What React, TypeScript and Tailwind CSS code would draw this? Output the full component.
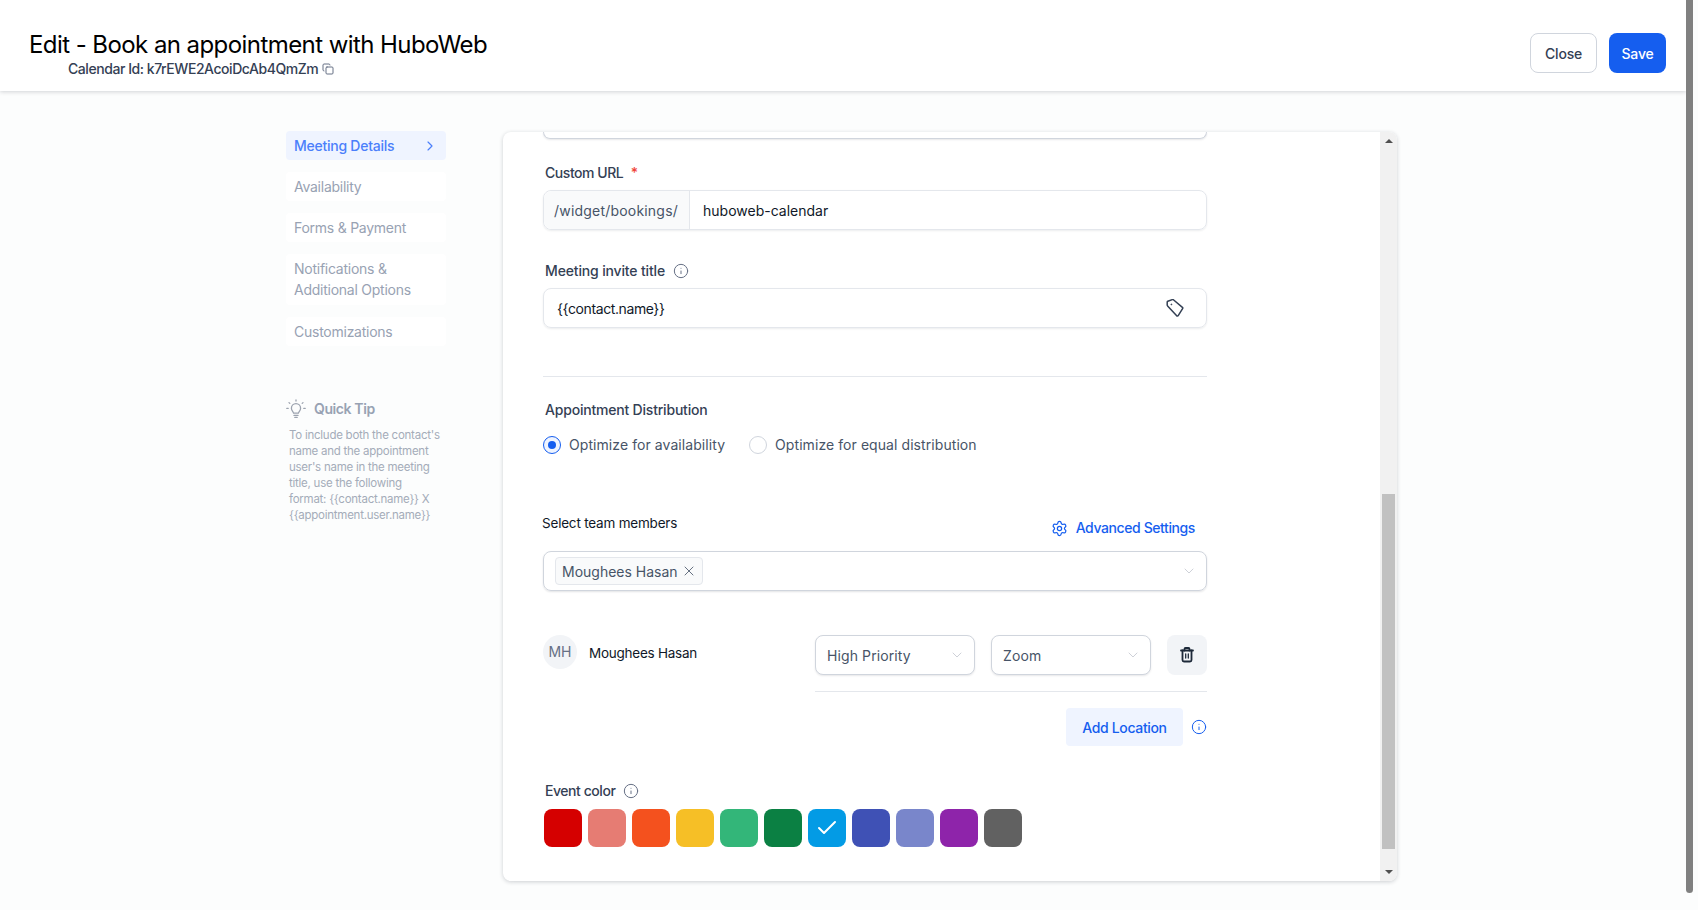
import { Check, ChevronDown, ChevronRight, Copy, Info, Settings, X } from "lucide-react";

const navItems = [
  { name: "Availability", h: "h-[29px]" },
  { name: "Forms & Payment", h: "h-[29px]" },
  { name: "Notifications & Additional Options", h: "h-[51px] pb-[2px]" },
  { name: "Customizations", h: "h-[29px]" },
];

const colors = [
  { hex: "bg-[#d50000]" },
  { hex: "bg-[#e67c73]" },
  { hex: "bg-[#f4511e]" },
  { hex: "bg-[#f6bf26]" },
  { hex: "bg-[#33b679]" },
  { hex: "bg-[#0b8043]" },
  { hex: "bg-[#039be5]", selected: true },
  { hex: "bg-[#3f51b5]" },
  { hex: "bg-[#7986cb]" },
  { hex: "bg-[#8e24aa]" },
  { hex: "bg-[#616161]" },
];

function SelectBox({ label }: { label: string }) {
  return (
    <div className="flex h-10 w-[160px] items-center justify-between rounded-lg border border-[#d0d5dd] bg-white pl-[11px] pr-[9px] text-[14px] tracking-[0.1px] text-[#475467] shadow-[0_1px_2px_rgba(16,24,40,0.1)]">
      <span>{label}</span>
      <ChevronDown className="h-4 w-4 text-[#c4c8d0]" strokeWidth={1.25} />
    </div>
  );
}

function Bulb() {
  return (
    <svg width="20" height="20" viewBox="0 0 20 20" fill="none" stroke="#9ca3af" strokeWidth="1.3" strokeLinecap="round" strokeLinejoin="round">
      <path d="M7.6 14.2c0-1.3-2.2-2.4-2.2-5a4.6 4.6 0 0 1 9.2 0c0 2.6-2.2 3.7-2.2 5z" />
      <path d="M8 16.4h4M8.8 18.4h2.4" />
      <path d="M10 1v1M3 3.6l.8.8M17 3.6l-.8.8M.8 9.4h1.4M17.8 9.4h1.4" />
    </svg>
  );
}

function TagIcon() {
  return (
    <svg width="18" height="18" viewBox="0 0 18 18" fill="none" stroke="#344054" strokeWidth="1.5" strokeLinejoin="round">
      <path d="M1.2 3.2a1 1 0 0 1 .6-.9l4.6-1.7a1 1 0 0 1 1 .15l9 7.6a1 1 0 0 1 .2 1.3l-4.4 7a1 1 0 0 1-1.5.2L1.6 6.9a1 1 0 0 1-.4-.8z" />
      <circle cx="5.4" cy="5.4" r="0.5" fill="#344054" strokeWidth="0.8" />
    </svg>
  );
}

function TrashIcon() {
  return (
    <svg width="14" height="16" viewBox="0 0 14 16" fill="none" stroke="#1d2939" strokeWidth="1.8" strokeLinecap="round" strokeLinejoin="round">
      <path d="M1 3.5h12" />
      <path d="M4.5 3.5V2a1 1 0 0 1 1-1h3a1 1 0 0 1 1 1v1.5" />
      <path d="M2.5 3.5v9.5A1.5 1.5 0 0 0 4 14.5h6a1.5 1.5 0 0 0 1.5-1.5V3.5" />
      <path d="M5.7 7v4M8.3 7v4" strokeWidth="1.3" />
    </svg>
  );
}

function Sidebar() {
  return (
    <aside className="w-[160px] shrink-0">
      <div className="flex h-[29px] items-center justify-between rounded bg-[#eff4ff] pl-2 pr-[8px] text-[14px] font-medium tracking-[-0.25px] text-[#4b7ffb]">
        <span>Meeting Details</span>
        <ChevronRight className="h-4 w-4" strokeWidth={1.75} />
      </div>
      <nav className="mt-3 flex flex-col gap-3">
        {navItems.map((item) => (
          <div key={item.name} className={`${item.h} flex items-center rounded bg-white px-2 text-[14px] leading-[21px] tracking-[-0.25px] text-[#98a2b3]`}>
            {item.name}
          </div>
        ))}
      </nav>
      <div className="mt-[52px] flex items-center gap-2 text-[14px] font-semibold tracking-[-0.4px] text-[#98a2b3]">
        <Bulb />
        <span>Quick Tip</span>
      </div>
      <p className="mt-[8px] pl-[3px] text-[11.5px] leading-4 tracking-[-0.25px] text-[#a4acb9]">
        To include both the contact's
        <br />
        name and the appointment
        <br />
        user's name in the meeting
        <br />
        title, use the following
        <br />
        format: {"{{contact.name}}"} X
        <br />
        {"{{appointment.user.name}}"}
      </p>
    </aside>
  );
}

function ScrollRail() {
  return (
    <div className="flex w-[17px] shrink-0 flex-col items-center bg-[#f1f1f1]">
      <div className="mt-[7px] h-0 w-0 border-x-[4px] border-b-[4px] border-x-transparent border-b-[#505050]" />
      <div className="mt-[351px] h-[355px] w-[13px] bg-[#c1c1c1]" />
      <div className="mt-[21px] h-0 w-0 border-x-[4px] border-t-[4px] border-x-transparent border-t-[#505050]" />
    </div>
  );
}

export default function App() {
  return (
    <div className="flex h-[910px] overflow-hidden bg-[#fcfdfd] font-['Inter',sans-serif]">
      <div className="w-[1686px] shrink-0">
        <header className="flex h-[91px] items-start justify-between bg-white pl-[29px] pr-[20px] pt-[28px] shadow-[0_1px_4px_rgba(16,24,40,0.18)]">
          <div>
            <h1 className="mt-px text-[24px] leading-8 tracking-[-0.57px] text-black">Edit - Book an appointment with HuboWeb</h1>
            <div className="-mt-[2px] flex items-center gap-1 pl-[39px] text-[14px] font-medium leading-5 tracking-[-0.44px] text-[#344054]">
              <span>Calendar Id: k7rEWE2AcoiDcAb4QmZm</span>
              <Copy className="h-3 w-3 text-[#667085]" />
            </div>
          </div>
          <div className="mt-[5px] flex gap-3">
            <button className="h-10 w-[67px] rounded-lg border border-[#d0d5dd] bg-white text-[14px] font-medium tracking-[-0.2px] text-[#344054]">Close</button>
            <button className="h-10 w-[57px] rounded-lg bg-[#155eef] text-[14px] font-medium tracking-[-0.2px] text-white">Save</button>
          </div>
        </header>

        <div className="flex pl-[286px] pt-[40px]">
          <Sidebar />
          <main className="ml-[57px] mt-[1px] flex h-[749px] w-[894px] overflow-hidden rounded-lg bg-white shadow-[0_1px_4px_rgba(16,24,40,0.2)]">
            <div className="w-[877px] pl-[40px]">
              <div className="w-[664px]">
                <div className="h-[7px] rounded-b-lg border-x border-b border-[#d0d5dd] shadow-[0_1px_2px_rgba(16,24,40,0.1)]" />

                <label className="mt-[24px] block pl-[2px] text-[14px] font-medium leading-5 tracking-[-0.45px] text-[#344054]">
                  Custom URL <span className="ml-1 text-[#f04438]">*</span>
                </label>
                <div className="mt-[7px] flex h-10 items-stretch rounded-lg border border-[#e4e7ec] text-[14px] shadow-[0_1px_2px_rgba(16,24,40,0.08)]">
                  <div className="flex w-[146px] items-center rounded-l-lg border-r border-[#e4e7ec] bg-[#f9fafb] pl-[10px] tracking-[0.2px] text-[#475467]">/widget/bookings/</div>
                  <div className="flex items-center pl-[13px] text-[#101828]">huboweb-calendar</div>
                </div>

                <div className="mt-[31px] flex items-center gap-2 pl-[2px] text-[14px] font-medium leading-5 tracking-[-0.15px] text-[#344054]">
                  Meeting invite title
                  <Info className="h-4 w-4 text-[#667085]" strokeWidth={1.5} />
                </div>
                <div className="mt-[7px] flex h-10 items-center justify-between rounded-lg border border-[#e4e7ec] pl-[13px] pr-[22px] text-[14px] text-[#101828] shadow-[0_1px_2px_rgba(16,24,40,0.08)]">
                  <span className="tracking-[-0.4px]">{"{{contact.name}}"}</span>
                  <TagIcon />
                </div>

                <div className="mt-[48px] h-px bg-[#e4e7ec]" />

                <div className="mt-[23px] pl-[2px] text-[14px] font-medium leading-5 tracking-[-0.2px] text-[#344054]">Appointment Distribution</div>
                <div className="mt-[15px] flex items-center text-[14px] leading-5 tracking-[0.07px] text-[#475467]">
                  <span className="flex h-[18px] w-[18px] items-center justify-center rounded-full border border-[#155eef] bg-[#eff4ff]">
                    <span className="h-2 w-2 rounded-full bg-[#155eef]" />
                  </span>
                  <span className="ml-2">Optimize for availability</span>
                  <span className="ml-6 h-[18px] w-[18px] rounded-full border border-[#d0d5dd]" />
                  <span className="ml-2">Optimize for equal distribution</span>
                </div>

                <div className="mt-[58px] flex items-start justify-between pr-[12px]">
                  <span className="-ml-px text-[13.5px] leading-5 tracking-[-0.2px] text-[#101828]">Select team members</span>
                  <span className="mt-[5px] flex items-center gap-2 text-[14px] font-medium leading-5 tracking-[-0.4px] text-[#155eef]">
                    <Settings className="h-[17px] w-[17px]" strokeWidth={1.75} />
                    Advanced Settings
                  </span>
                </div>
                <div className="mt-[13px] flex h-10 items-center justify-between rounded-lg border border-[#d0d5dd] pl-[11px] pr-[9px] shadow-[0_1px_2px_rgba(16,24,40,0.12)]">
                  <span className="flex h-7 w-[148px] items-center justify-between rounded-sm border border-[#e4e7ec] bg-[#f9fafb] pl-[6px] pr-[5px] text-[14px] text-[#475467]">
                    Moughees Hasan
                    <X className="h-4 w-4" strokeWidth={1.25} />
                  </span>
                  <ChevronDown className="h-4 w-4 text-[#c4c8d0]" strokeWidth={1.25} />
                </div>

                <div className="mt-[44px] flex items-start">
                  <div className="flex h-[34px] w-[34px] items-start justify-center rounded-full bg-[#f2f4f7] pt-[9px] text-[14px] leading-4 text-[#667085]">MH</div>
                  <span className="ml-3 mt-[8px] w-[226px] text-[13.5px] leading-5 tracking-[-0.25px] text-[#101828]">Moughees Hasan</span>
                  <div className="flex gap-4">
                    <SelectBox label="High Priority" />
                    <SelectBox label="Zoom" />
                  </div>
                  <div className="ml-4 flex h-10 w-10 items-center justify-center rounded-lg bg-[#f2f4f7]">
                    <TrashIcon />
                  </div>
                </div>
                <div className="ml-[272px] mt-[16px] h-px bg-[#e4e7ec]" />
                <div className="mt-[16px] flex items-center justify-end">
                  <button className="h-[38px] w-[117px] rounded bg-[#eff4ff] text-[14px] font-medium tracking-[-0.35px] text-[#155eef]">Add Location</button>
                  <Info className="ml-2 h-4 w-4 text-[#155eef]" strokeWidth={1.5} />
                </div>

                <div className="mt-[35px] flex items-center gap-2 pl-[2px] text-[14px] font-medium leading-5 tracking-[-0.45px] text-[#344054]">
                  Event color
                  <Info className="h-4 w-4 text-[#667085]" strokeWidth={1.5} />
                </div>
                <div className="ml-px mt-[8px] flex gap-[6px]">
                  {colors.map((c) => (
                    <div key={c.hex} className={`${c.hex} flex h-[38px] w-[38px] items-center justify-center rounded-lg`}>
                      {c.selected && <Check className="h-6 w-6 text-white" strokeWidth={2} />}
                    </div>
                  ))}
                </div>
              </div>
            </div>
            <ScrollRail />
          </main>
        </div>
      </div>

      {/* page scrollbar */}
      <div className="w-[12px] shrink-0">
        <div className="h-[893px] w-[7px] rounded-b-full bg-[#808080]" />
      </div>
    </div>
  );
}
